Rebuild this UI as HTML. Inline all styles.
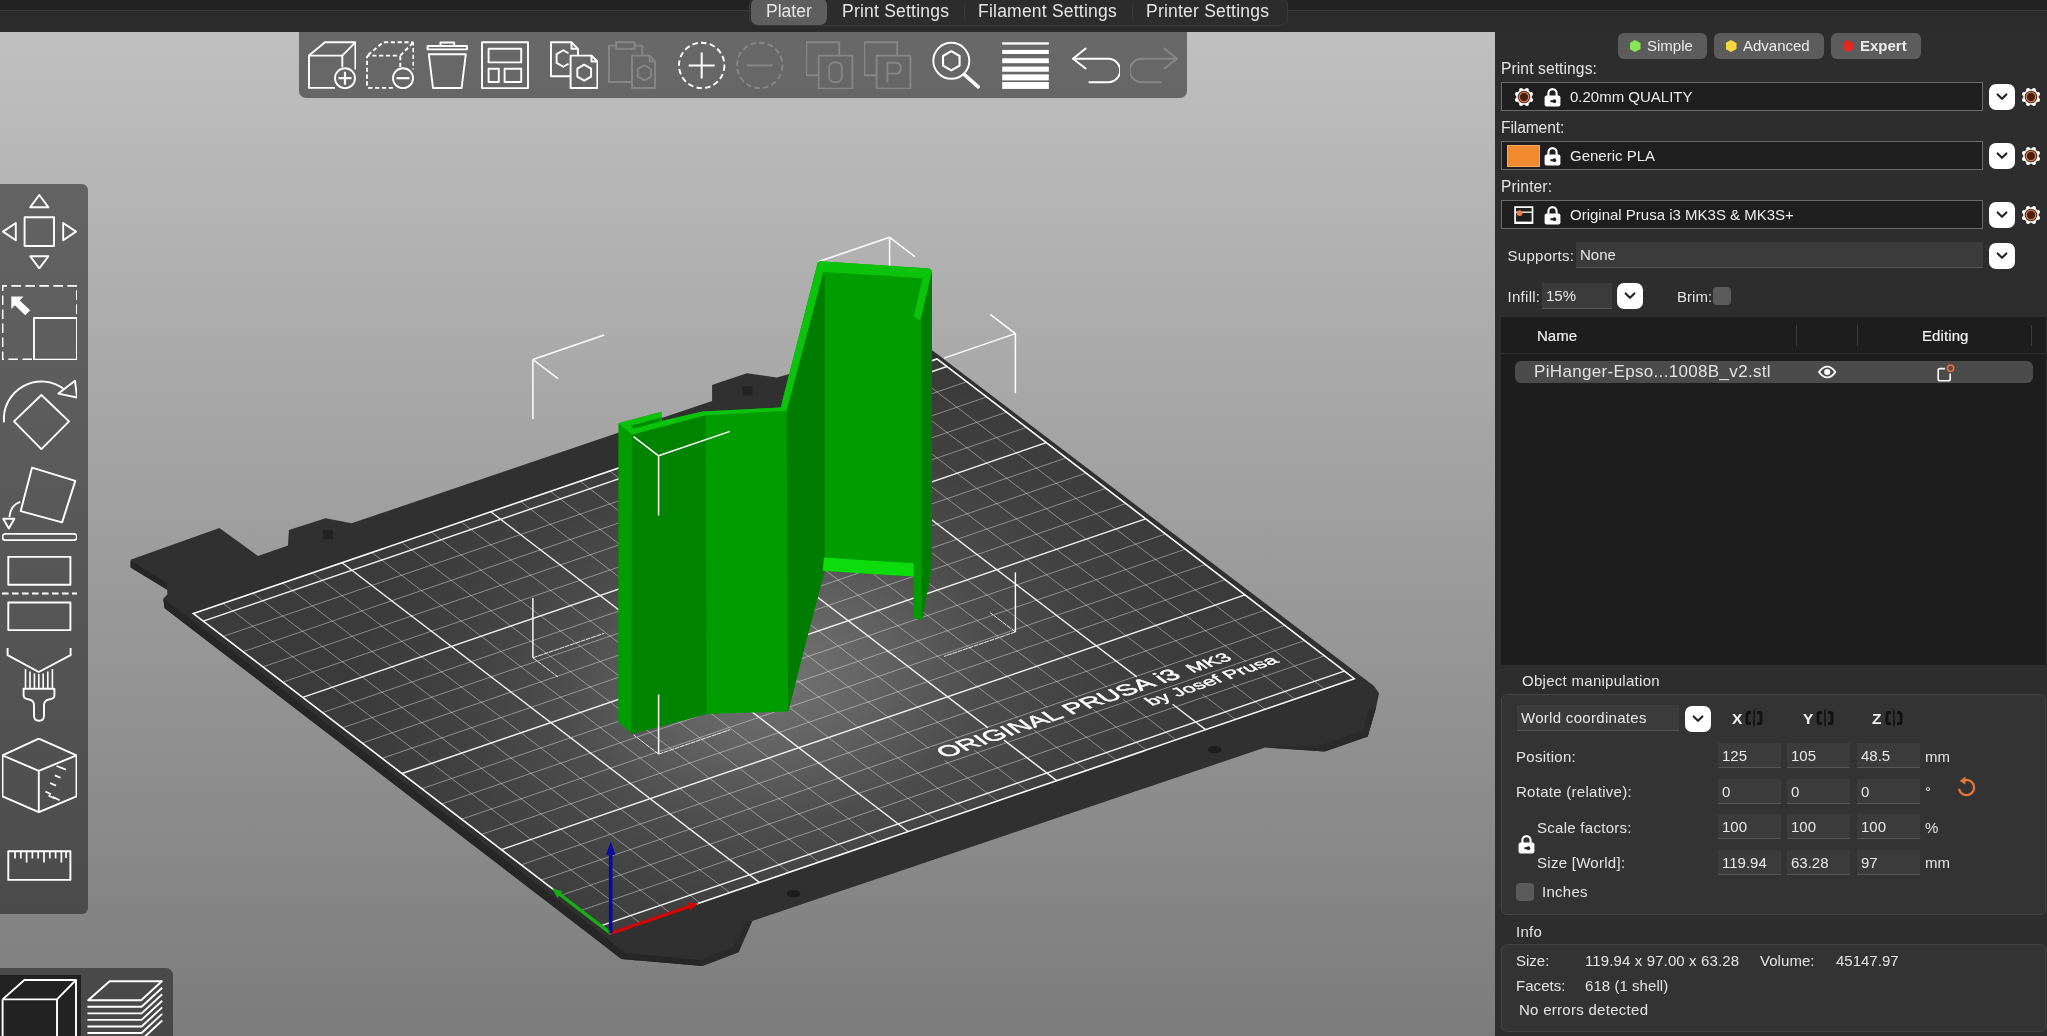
<!DOCTYPE html>
<html><head><meta charset="utf-8"><title>PrusaSlicer</title><style>
*{box-sizing:border-box;margin:0;padding:0}
html,body{width:2047px;height:1036px;overflow:hidden;background:#2b2b2b}
body{font-family:"Liberation Sans",sans-serif;color:#e6e6e6;position:relative;font-size:15px}
.abs{position:absolute}
#topbar{position:absolute;left:0;top:0;width:2047px;height:32px;background:#2b2b2b}
#topdark{position:absolute;left:0;top:0;width:2047px;height:10px;background:#222}
#topline{position:absolute;left:0;top:10px;width:2047px;height:1px;background:#383838}
#tabs{position:absolute;left:749px;top:-3px;width:539px;height:29px;background:#2c2c2c;border:1px solid #3a3a3a;border-radius:8px}
#tabs .sel{position:absolute;left:0.5px;top:0;width:76px;height:26.5px;background:#5e5e5e;border-radius:7px}
#tabs span{will-change:transform;position:absolute;top:3px;font-size:17.5px;color:#e6e6e6;white-space:nowrap;line-height:20px;letter-spacing:0.22px}
#tabs i{position:absolute;top:7px;width:1px;height:14px;background:#383838}
#canvas{position:absolute;left:0;top:32px;width:1495px;height:1004px;background:linear-gradient(#c0c0c0,#7c7c7c);overflow:hidden}
.scene{position:absolute;left:0;top:-32px;will-change:transform}
.tb{position:absolute;background:rgba(22,22,22,.515)}
#panel{position:absolute;left:1495px;top:32px;width:552px;height:1004px;background:#2d2d2d}
.lbl{position:absolute;white-space:nowrap;color:#e4e4e4;font-size:15px;line-height:18px;letter-spacing:0.28px;margin-top:1px}
.num{letter-spacing:0.1px}
.combo{position:absolute;left:1501px;width:482px;height:29px;background:#1e1e1e;border:1px solid #6a6a6a}
.combo span{position:absolute;left:68px;top:5px;font-size:15px;line-height:18px;color:#ececec;white-space:nowrap}
.dd{position:absolute;width:26.5px;height:26px;background:#fff;border-radius:7px;margin-left:-0.5px}
.dd svg{position:absolute;left:7px;top:8px}
.fld{position:absolute;background:#3b3b3b;border-bottom:1px solid #555;height:26px}
.fld span{position:absolute;left:4px;top:3.5px;font-size:15px;line-height:18px;color:#e8e8e8;white-space:nowrap}
.mode{position:absolute;top:33px;height:26px;background:#5c5c5c;border-radius:6px;font-size:15px;color:#ececec;line-height:26px;white-space:nowrap}
.mode b{position:absolute;left:11.5px;top:7px;width:11px;height:12px;clip-path:polygon(50% 0,100% 25%,100% 75%,50% 100%,0 75%,0 25%)}
.mode span{position:absolute;left:29px;top:0}
.chk{position:absolute;width:18px;height:18px;background:#5a5a5a;border-radius:4px}
.grp{position:absolute;left:1501px;width:545px;background:#333;border:1px solid #434343;border-radius:6px}
.in{position:absolute;width:63px;height:25px;background:#3b3b3b;border-bottom:1px solid #565656}
.in span{position:absolute;left:4px;top:3.5px;font-size:15px;line-height:18px;color:#e8e8e8}
</style></head><body>
<div id="topbar"><div id="topdark"></div><div id="topline"></div><div id="tabs"><div class="sel"></div><span style="left:16px;letter-spacing:0">Plater</span><span style="left:92px">Print Settings</span><span style="left:228px">Filament Settings</span><span style="left:396px">Printer Settings</span><i style="left:214px"></i><i style="left:382px"></i></div></div>
<div id="canvas"><svg class="scene" width="1495" height="1036" viewBox="0 0 1495 1036">
<defs>
<radialGradient id="bedhl" cx="0.5" cy="0.5" r="0.5"><stop offset="0" stop-color="#fff" stop-opacity="0.29"/><stop offset="0.25" stop-color="#fff" stop-opacity="0.2"/><stop offset="0.5" stop-color="#fff" stop-opacity="0.09"/><stop offset="0.75" stop-color="#fff" stop-opacity="0.03"/><stop offset="1" stop-color="#fff" stop-opacity="0"/></radialGradient>
<clipPath id="bedclip"><polygon points="610.7,933.4 1354.3,678.7 937.0,358.9 193.4,613.6"/></clipPath>
</defs>
<polygon points="130.6,559.8 130.6,567.6 167.3,589.8 167.3,594.6 163.4,598.5 164.4,608.1 590.0,934.7 621.3,959.1 702.4,966.0 738.5,952.3 752.2,921.0 1265.0,747.5 1324.8,751.6 1367.8,736.4 1376.0,707.7 1379.0,693.3 1374.0,686.0 908.5,332.3 788.5,374.2 776.8,377.6 747.0,373.2 712.1,384.9 712.1,401.0 351.7,523.2 325.6,518.3 288.9,529.9 288.0,545.4 258.0,556.0 219.4,528.0" fill="#303030" />
<polygon points="130.6,560.8 130.6,567.6 167.3,589.8 167.3,583.0" fill="#262626" />
<polygon points="163.4,598.5 164.4,608.1 590.0,934.7 621.3,959.1 702.4,966.0 700.0,960.0 625.0,953.0 597.0,930.0" fill="#262626" />
<polygon points="702.4,966.0 738.5,952.3 752.2,921.0 746.0,921.0 733.0,947.0 700.0,960.0" fill="#2a2a2a" />
<polygon points="1265.0,747.5 1324.8,751.6 1367.8,736.4 1376.0,707.7 1370.0,708.0 1362.0,731.0 1322.0,745.0" fill="#2a2a2a" />
<rect x="322.9" y="530.2" width="10" height="9" fill="#222"/>
<rect x="742.5" y="386.3" width="10" height="9" fill="#222"/>
<ellipse cx="793.4" cy="893.6" rx="7" ry="3.6" fill="#1c1c1c"/>
<ellipse cx="1214.8" cy="749.6" rx="7" ry="3.6" fill="#1c1c1c"/>
<polygon points="610.7,933.4 1354.3,678.7 937.0,358.9 193.4,613.6" fill="#3b3b3b" />
<g clip-path="url(#bedclip)"><ellipse cx="775" cy="675" rx="430" ry="300" fill="url(#bedhl)" transform="rotate(-10 775 675)"/></g>
<path d="M640.4 923.2L223.1 603.4M670.2 913.0L252.9 593.2M699.9 902.8L282.6 583.0M729.7 892.6L312.3 572.8M789.1 872.2L371.8 552.5M818.9 862.1L401.6 542.3M848.6 851.9L431.3 532.1M878.4 841.7L461.1 521.9M937.9 821.3L520.6 501.5M967.6 811.1L550.3 491.3M997.4 800.9L944.5 760.4M928.6 748.2L580.0 481.2M1027.1 790.7L974.2 750.2M958.3 738.1L609.8 471.0M1086.6 770.4L1033.7 729.9M1017.8 717.7L669.3 450.6M1116.3 760.2L1063.5 719.7M1047.6 707.5L699.0 440.4M1146.1 750.0L1093.2 709.5M1077.3 697.3L728.8 430.2M1175.8 739.8L1123.0 699.3M1107.1 687.1L758.5 420.0M1235.3 719.4L1202.3 694.2M1166.5 666.7L818.0 399.7M1265.0 709.2L1232.1 684.0M1196.3 656.6L847.7 389.5M1294.8 699.1L1261.8 673.8M1245.9 661.6L877.5 379.3M1324.5 688.9L907.2 369.1M580.9 910.5L1324.5 655.8M561.0 895.3L1304.6 640.6M541.1 880.1L1284.7 625.4M521.3 864.8L1264.9 610.2M481.5 834.4L1225.1 579.7M461.6 819.2L1205.2 564.5M441.8 803.9L1185.4 549.2M421.9 788.7L1165.5 534.0M382.2 758.3L1125.8 503.6M362.3 743.0L1105.9 488.3M342.4 727.8L1086.0 473.1M322.5 712.6L1066.1 457.9M282.8 682.1L1026.4 427.4M262.9 666.9L1006.5 412.2M243.0 651.7L986.6 397.0M223.2 636.4L966.8 381.7" stroke="#fff" stroke-opacity="0.4" stroke-width="1" fill="none"/>
<path d="M759.4 882.4L342.1 562.7M908.1 831.5L490.8 511.7M1056.8 780.6L1004.0 740.1M988.1 727.9L639.5 460.8M1205.6 729.6L1172.6 704.3M1136.8 676.9L788.2 409.8M600.7 925.8L1344.3 671.1M501.4 849.6L1245.0 594.9M402.0 773.5L1145.6 518.8M302.7 697.3L1046.3 442.7M203.3 621.2L946.9 366.5" stroke="#fff" stroke-opacity="0.92" stroke-width="1.4" fill="none"/>
<polygon points="610.7,933.4 1354.3,678.7 937.0,358.9 193.4,613.6" fill="none" stroke="#fff" stroke-width="1.6"/>
<text transform="matrix(2.9744 -1.0188 1.9872 1.5228 945.1 758.2)" font-family="Liberation Sans, sans-serif" font-size="8.35" fill="#fff" stroke="#fff" stroke-width="0.22" textLength="79.8" lengthAdjust="spacingAndGlyphs">ORIGINAL PRUSA i3</text>
<text transform="matrix(2.9744 -1.0188 1.9872 1.5228 1192.8 673.0)" font-family="Liberation Sans, sans-serif" font-size="6.6" fill="#fff" stroke="#fff" stroke-width="0.18" textLength="13.6" lengthAdjust="spacingAndGlyphs">MK3</text>
<text transform="matrix(2.9744 -1.0188 1.9872 1.5228 1151.8 705.9)" font-family="Liberation Sans, sans-serif" font-size="6.5" fill="#fff" stroke="#fff" stroke-width="0.18" textLength="43" lengthAdjust="spacingAndGlyphs">by Josef Prusa</text>
<path d="M889.6 237.3L818.3 261.7M889.6 237.3L914.8 256.6M889.6 237.3L889.6 296.9M532.9 359.5L604.2 335.0M532.9 359.5L558.0 378.7M532.9 359.5L532.9 419.1M1015.4 333.6L944.0 358.1M1015.4 333.6L990.2 314.4M1015.4 333.6L1015.4 393.3" stroke="#fff" stroke-width="1.5" fill="none"/>
<path d="M532.9 657.8L532.9 598.1" stroke="#fff" stroke-width="1.4" fill="none"/>
<path d="M532.9 657.8L604.2 633.3M532.9 657.8L558.0 677.0" stroke="#fff" stroke-width="1" stroke-opacity="0.88" stroke-dasharray="5 0.6" fill="none"/>
<path d="M1015.4 631.9L1015.4 572.3" stroke="#fff" stroke-width="1.4" fill="none"/>
<path d="M1015.4 631.9L944.0 656.4M1015.4 631.9L990.2 612.7" stroke="#fff" stroke-width="1" stroke-opacity="0.88" stroke-dasharray="5 0.6" fill="none"/>
<polygon points="618.4,423.2 661.5,411.8 661.5,421.0 702.5,411.5 780.7,407.4 817.7,262.5 819.5,261.2 929.5,268.6 931.9,271.0 931.9,567.7 921.8,620.4 913.7,617.9 913.7,576.5 822.7,570.8 824.6,570.8 803.9,650.0 788.2,711.5 706.6,714.0 631.4,734.1 618.2,721.6" fill="#009c00" />
<polygon points="632.0,434.5 705.5,415.2 706.6,714.0 631.4,734.1" fill="#008400" />
<polygon points="786.6,410.8 823.4,272.0 824.7,275.0 824.7,570.8 803.9,650.0 788.2,711.5" fill="#007c00" />
<polygon points="931.9,271.0 931.9,567.7 921.8,620.4 921.0,320.3" fill="#007c00" />
<polygon points="618.4,423.2 661.5,411.8 661.5,421.0 702.5,411.5 780.7,407.4 817.7,262.5 819.5,261.2 929.5,268.6 931.9,271.0 920.2,320.6 913.7,316.6 922.5,278.3 823.4,272.0 786.6,410.8 705.5,415.2 632.0,434.5" fill="#0cc30c" />
<polygon points="630.7,425.6 659.0,418.0 659.0,421.7 633.9,428.5" fill="#008a00" />
<polygon points="659.0,417.4 661.5,416.8 661.5,421.0 659.0,421.7" fill="#009c00" />
<polygon points="824.0,557.6 913.7,563.3 913.7,576.5 822.7,570.8" fill="#0cdc0c" />
<path d="M658.6 455.8L730.0 431.4M658.6 455.8L633.5 436.6M658.6 455.8L658.6 515.5" stroke="#fff" stroke-width="1.5" fill="none"/>
<path d="M658.6 754.1L658.6 694.5" stroke="#fff" stroke-width="1.5" fill="none"/>
<path d="M658.6 754.1L730.0 729.7M658.6 754.1L633.5 734.8" stroke="#fff" stroke-width="1" stroke-opacity="0.88" stroke-dasharray="5 0.6" fill="none"/>
<path d="M610.7 933.4L560.0 894.5" stroke="#14b014" stroke-width="3.3"/><polygon points="552.1,888.4 562.5,891.2 557.4,897.9" fill="#14b014"/>
<path d="M610.7 933.4L689.0 906.6" stroke="#cc0808" stroke-width="3.3"/><polygon points="698.4,903.3 690.3,910.5 687.6,902.6" fill="#cc0808"/>
<path d="M610.7 933.4L610.7 854.7" stroke="#0808a8" stroke-width="3.6"/><polygon points="610.7,841.7 615.3,854.7 606.1,854.7" fill="#0808a8"/>
</svg></div>
<div class="tb" style="left:299px;top:32px;width:888px;height:66px;border-radius:0 0 7px 7px"></div>
<svg style="position:absolute;left:308px;top:41px" width="48" height="48" viewBox="0 0 48 48"><g fill="none" stroke="#fff" stroke-width="1.9" stroke-linejoin="round" stroke-linecap="butt"><path d="M34.3 26V14.6H1V46.9H27"/><path d="M1 14.6L17 1.3H47.4V28.5"/><path d="M34.3 14.6L47.4 1.3"/><circle cx="37" cy="37.2" r="10"/><path d="M37 30.7V43.7M30.5 37.2H43.5" stroke-width="2.2"/></g></svg>
<svg style="position:absolute;left:366px;top:41px" width="48" height="48" viewBox="0 0 48 48"><g fill="none" stroke="#fff" stroke-width="1.9" stroke-linejoin="round" stroke-linecap="butt"><g stroke-dasharray="4.2 2.6"><path d="M34.3 26V16.6Q34.3 14.6 32.3 14.6H3Q1 14.6 1 16.6V44.9Q1 46.9 3 46.9H27"/><path d="M2 14L16 2.3Q17 1.3 19 1.3H45.4Q47.4 1.3 47.4 3.3V28.5"/><path d="M34.3 14.6L46.8 2"/></g><circle cx="37" cy="37.2" r="10"/><path d="M30.5 37.2H43.5" stroke-width="2.2"/></g></svg>
<svg style="position:absolute;left:424px;top:41px" width="48" height="48" viewBox="0 0 48 48"><g fill="none" stroke="#fff" stroke-width="1.9" stroke-linejoin="round" stroke-linecap="butt"><path d="M16.4 5V1.5H30.2V5"/><rect x="3.6" y="5" width="39.4" height="3.4"/><path d="M4.8 13.2H41.8L37.6 47H9Z"/></g></svg>
<svg style="position:absolute;left:481px;top:41px" width="48" height="48" viewBox="0 0 48 48"><g fill="none" stroke="#fff" stroke-width="1.9" stroke-linejoin="round" stroke-linecap="butt"><rect x="1" y="1.3" width="46" height="45.8"/><rect x="7.6" y="7.8" width="32.6" height="13.6"/><rect x="7.6" y="27.8" width="10.2" height="13.2"/><rect x="23.6" y="27.8" width="16.6" height="13.2"/></g></svg>
<svg style="position:absolute;left:550px;top:41px" width="48" height="48" viewBox="0 0 48 48"><g fill="none" stroke="#fff" stroke-width="1.9" stroke-linejoin="round" stroke-linecap="butt"><path d="M20.6 35.2H1V1.3H21.5L28 7.8V14.6"/><path d="M21.5 1.3V7.8H28"/><path d="M18.5 12.2L13.3 9.2L6.6 13.1V21.9L13.3 25.8L18.5 22.8"/><path d="M20.6 14.6H41.5L47.4 20.5V47H20.6Z"/><path d="M41.5 14.6V20.5H47.4"/><path d="M41.1 35.6L34.2 39.6L27.3 35.6L27.3 27.6L34.2 23.6L41.1 27.6Z"/></g></svg>
<svg style="position:absolute;left:608px;top:41px" width="48" height="48" viewBox="0 0 48 48" opacity="0.2"><g fill="none" stroke="#fff" stroke-width="1.9" stroke-linejoin="round" stroke-linecap="butt"><path d="M24 41H0.9V4.6H8.2M26.6 4.6H34.3V14.6"/><rect x="8.2" y="1.3" width="18.4" height="6.4"/><path d="M24 14.6H41.5L47 20.5V47H24Z"/><path d="M41.5 14.6V20.5H47"/><path d="M43.0 35.6L36.4 39.4L29.8 35.6L29.8 28.0L36.4 24.2L43.0 28.0Z"/></g></svg>
<svg style="position:absolute;left:678px;top:41px" width="48" height="48" viewBox="0 0 48 48"><g fill="none" stroke="#fff" stroke-width="1.9" stroke-linejoin="round" stroke-linecap="butt"><circle cx="23.7" cy="24.4" r="22.7" stroke-dasharray="5.6 3.2"/><path d="M23.7 11.4V37.4M10.7 24.4H36.7" stroke-width="2"/></g></svg>
<svg style="position:absolute;left:736px;top:41px" width="48" height="48" viewBox="0 0 48 48" opacity="0.2"><g fill="none" stroke="#fff" stroke-width="1.9" stroke-linejoin="round" stroke-linecap="butt"><circle cx="23.7" cy="24.4" r="22.7" stroke-dasharray="5.6 3.2"/><path d="M10.7 24.4H36.7" stroke-width="2"/></g></svg>
<svg style="position:absolute;left:806px;top:41px" width="48" height="48" viewBox="0 0 48 48" opacity="0.2"><g fill="none" stroke="#fff" stroke-width="1.9" stroke-linejoin="round" stroke-linecap="butt"><path d="M12.6 34.2H0.3V1.3H33.2V14.6"/><rect x="12.6" y="14.6" width="33.8" height="33"/><rect x="23.2" y="21.5" width="12.6" height="19.6" rx="5"/></g></svg>
<svg style="position:absolute;left:864px;top:41px" width="48" height="48" viewBox="0 0 48 48" opacity="0.2"><g fill="none" stroke="#fff" stroke-width="1.9" stroke-linejoin="round" stroke-linecap="butt"><path d="M12.6 34.2H0.3V1.3H33.2V14.6"/><rect x="12.6" y="14.6" width="33.8" height="33"/><path d="M23.4 41.6V21.8H31.5Q36.8 21.8 36.8 27.2Q36.8 32.6 31.5 32.6H23.4"/></g></svg>
<svg style="position:absolute;left:932px;top:41px" width="48" height="48" viewBox="0 0 48 48"><g fill="none" stroke="#fff" stroke-width="1.9" stroke-linejoin="round" stroke-linecap="butt"><circle cx="19.3" cy="19.8" r="18"/><path d="M27.6 24.6L19.3 29.4L11.0 24.6L11.0 15.0L19.3 10.2L27.6 15.0Z" stroke-width="2.1"/><path d="M32.4 33.6L46.2 45.8" stroke-width="3.6" stroke-linecap="round"/></g></svg>
<svg style="position:absolute;left:1002px;top:41px" width="48" height="48" viewBox="0 0 48 48"><g fill="none" stroke="#fff" stroke-width="1.9" stroke-linejoin="round" stroke-linecap="butt"><g stroke="none" fill="#fff"><rect x="0.2" y="1.3" width="46.6" height="2.3"/><rect x="0.2" y="8.9" width="46.6" height="4.1"/><rect x="0.2" y="17.3" width="46.6" height="4.9"/><rect x="0.2" y="25.6" width="46.6" height="5.1"/><rect x="0.2" y="33.4" width="46.6" height="6"/><rect x="0.2" y="41" width="46.6" height="6.9"/></g></g></svg>
<svg style="position:absolute;left:1072px;top:41px" width="48" height="48" viewBox="0 0 48 48"><g fill="none" stroke="#fff" stroke-width="1.9" stroke-linejoin="round" stroke-linecap="butt"><path d="M13.6 7.4L1 17.8L13.6 27.4" stroke-linecap="round"/><path d="M1.2 17.8H36.4A11.7 11.7 0 0 1 36.4 41.2H17.4" stroke-linecap="round"/></g></svg>
<svg style="position:absolute;left:1130px;top:41px" width="48" height="48" viewBox="0 0 48 48" opacity="0.2"><g fill="none" stroke="#fff" stroke-width="1.9" stroke-linejoin="round" stroke-linecap="butt"><path d="M34.4 7.4L47 17.8L34.4 27.4" stroke-linecap="round"/><path d="M46.8 17.8H11.6A11.7 11.7 0 0 0 11.6 41.2H30.6" stroke-linecap="round"/></g></svg>
<div class="tb" style="left:0;top:184px;width:88px;height:730px;border-radius:0 6px 6px 0"></div>
<svg style="position:absolute;left:2px;top:194.3px" width="75" height="75" viewBox="0 0 75 75"><g fill="none" stroke="#fff" stroke-width="1.9" stroke-linejoin="round" stroke-linecap="butt"><rect x="22.6" y="23.3" width="29.4" height="28.7"/><path d="M37.3 1L28.2 13.2H46.4Z"/><path d="M37.3 74.4L28.2 62.2H46.4Z"/><path d="M1 37.6L13.8 29V46.3Z"/><path d="M74 37.6L61.2 29V46.3Z"/></g></svg>
<svg style="position:absolute;left:2px;top:284.6px" width="75" height="75" viewBox="0 0 75 75"><g fill="none" stroke="#fff" stroke-width="1.9" stroke-linejoin="round" stroke-linecap="butt"><path d="M32 74.5H0.5V0.9H75V33" stroke-dasharray="9.6 4.4" stroke-dashoffset="-2"/><rect x="32" y="33" width="43" height="41.6"/><path d="M9.3 11.6H21.5L17.7 15.4L28.2 25.2L23.2 30.3L12.9 20.3L9.3 24Z" fill="#fff" stroke="none"/></g></svg>
<svg style="position:absolute;left:2px;top:375.2px" width="75" height="75" viewBox="0 0 75 75"><g fill="none" stroke="#fff" stroke-width="1.9" stroke-linejoin="round" stroke-linecap="butt"><path d="M39.4 20L67 46.4L39.4 74.2L12 46.4Z"/><path d="M2 47.4A37.5 37.5 0 0 1 62.5 14.5"/><path d="M56.4 18.6L73 5.8L75 22.5Z"/></g></svg>
<svg style="position:absolute;left:2px;top:465.8px" width="75" height="75" viewBox="0 0 75 75"><g fill="none" stroke="#fff" stroke-width="1.9" stroke-linejoin="round" stroke-linecap="butt"><path d="M30 1.7L73.3 14.9L60.1 56.4L18.7 45.1Z"/><path d="M18.2 35.8Q8.5 39 7.4 51"/><path d="M1.2 52.8H12.4L6.8 62.4Z"/><rect x="0.4" y="67.9" width="74.6" height="6.4" rx="3.2"/></g></svg>
<svg style="position:absolute;left:2px;top:556.4px" width="75" height="75" viewBox="0 0 75 75"><g fill="none" stroke="#fff" stroke-width="1.9" stroke-linejoin="round" stroke-linecap="butt"><rect x="6.3" y="0.8" width="62.1" height="28"/><path d="M0 37.5H75" stroke-dasharray="6.6 3.4"/><rect x="6.3" y="46.5" width="62.1" height="27.6"/></g></svg>
<svg style="position:absolute;left:2px;top:647px" width="75" height="75" viewBox="0 0 75 75"><g fill="none" stroke="#fff" stroke-width="1.9" stroke-linejoin="round" stroke-linecap="butt"><path d="M5.6 1.1V8.2L36.8 25L68.6 8.2V1.1"/><path d="M23.5 22V41.8M28 24.4V41.8M32.4 26.6V41.8M36.8 27V41.8M41.2 26.6V41.8M45.8 24.4V41.8M50.4 22V41.8" stroke-width="1.6"/><path d="M21.6 41.8V48.2Q21.6 51.6 26 52.2Q32 53 32 58V68.5Q32 73.8 37 73.8Q42 73.8 42 68.5V58Q42 53 48 52.2Q52.4 51.6 52.4 48.2V41.8Z"/></g></svg>
<svg style="position:absolute;left:2px;top:737.6px" width="75" height="75" viewBox="0 0 75 75"><g fill="none" stroke="#fff" stroke-width="1.9" stroke-linejoin="round" stroke-linecap="butt"><path d="M36.8 0.6L74.5 17.4V58.4L36.8 74.2L0.5 58.4V17.4Z"/><path d="M0.5 17.4L36.8 32.8L74.5 17.4M36.8 32.8V74.2"/><path d="M54.6 28L64 31.6M52.8 37.4L58.6 39.8M48 45L54 47.6M43.4 53.6L49 56.2M46.4 57.4L52.8 60.4M51 59L57.6 62.2" stroke-width="1.7"/></g></svg>
<svg style="position:absolute;left:2px;top:828.2px" width="75" height="75" viewBox="0 0 75 75"><g fill="none" stroke="#fff" stroke-width="1.9" stroke-linejoin="round" stroke-linecap="butt"><rect x="6.3" y="23.3" width="62.1" height="28.6"/><path d="M13 23.3V30.4M18.8 23.3V30.4M24.6 23.3V34.4M30.4 23.3V30.4M36.2 23.3V30.4M42 23.3V34.4M47.8 23.3V30.4M53.6 23.3V30.4M59.4 23.3V34.4M64 23.3V30" stroke-width="1.7"/></g></svg>
<div class="tb" style="left:0;top:968px;width:173px;height:68px;border-radius:0 7px 0 0"></div>
<div class="abs" style="left:0;top:975px;width:81px;height:61px;background:#222"></div>
<svg class="abs" style="left:0;top:975px" width="82" height="61" viewBox="0 0 82 61"><g fill="none" stroke="#fff" stroke-width="1.9" stroke-linejoin="round"><path d="M2.6 24.4H57V63M2.6 24.4V63M2.6 24.4L24.4 5H76V63M57 24.4L76 5"/></g></svg><svg class="abs" style="left:84px;top:975px" width="84" height="61" viewBox="84 975 84 61"><g fill="none" stroke="#fff" stroke-width="1.9" stroke-linejoin="round"><path d="M88.2 1000.3L109.6 981.2H161.8L141.2 1000.3Z"/><path d="M87.4 1006.8H141.6L162.2 987.7"/><path d="M87.4 1013.4H141.6L162.2 994.3"/><path d="M87.4 1019.9H141.6L162.2 1000.8"/><path d="M87.4 1026.5H141.6L162.2 1007.4"/><path d="M87.4 1033.0H141.6L162.2 1013.9"/><path d="M87.4 1039.6H141.6L162.2 1020.5"/></g></svg>
<div id="panel"></div>
<div style="position:absolute;left:0;top:0;width:2047px;height:1036px;will-change:transform"><div class="mode" style="left:1618px;width:89px"><b style="background:#86e656"></b><span>Simple</span></div>
<div class="mode" style="left:1714px;width:110px"><b style="background:#f8d640"></b><span>Advanced</span></div>
<div class="mode" style="left:1831px;width:90px"><b style="background:#e2281e"></b><span style="font-weight:bold">Expert</span></div>
<div class="lbl" style="left:1501px;top:59px;font-size:15.6px;letter-spacing:0.1px">Print settings:</div>
<div class="combo" style="top:82px"><span>0.20mm QUALITY</span></div>
<svg class="abs" style="left:1512.7px;top:86px" width="22" height="22" viewBox="-11 -11 22 22"><circle cx="6.98" cy="2.89" r="2.05" fill="#fff"/><circle cx="2.89" cy="6.98" r="2.05" fill="#fff"/><circle cx="-2.89" cy="6.98" r="2.05" fill="#fff"/><circle cx="-6.98" cy="2.89" r="2.05" fill="#fff"/><circle cx="-6.98" cy="-2.89" r="2.05" fill="#fff"/><circle cx="-2.89" cy="-6.98" r="2.05" fill="#fff"/><circle cx="2.89" cy="-6.98" r="2.05" fill="#fff"/><circle cx="6.98" cy="-2.89" r="2.05" fill="#fff"/><circle r="7.8" fill="#fff"/><circle r="6.3" fill="#5a2a14"/><circle r="4.7" fill="none" stroke="#d98a62" stroke-width="1.1"/><circle r="3.6" fill="#4a1e08"/></svg>
<svg class="abs" style="left:1544.2px;top:88px" width="17" height="19" viewBox="0 0 17 19"><path d="M4.4 8V5.2A4.1 4.1 0 0 1 12.6 5.2V8" fill="none" stroke="#fff" stroke-width="2.1"/><rect x="0.6" y="7.6" width="15.8" height="11" rx="2" fill="#fff"/><path d="M6.4 13.2H9.6" stroke="#222" stroke-width="2"/><circle cx="10.4" cy="13.2" r="1.9" fill="#222"/></svg>
<div class="dd" style="left:1989px;top:84px"><svg width="12" height="10" viewBox="0 0 12 10"><path d="M1.6 2.4L6 6.8L10.4 2.4" fill="none" stroke="#222" stroke-width="2.1" stroke-linecap="round" stroke-linejoin="round"/></svg></div>
<svg class="abs" style="left:2020px;top:86px" width="22" height="22" viewBox="-11 -11 22 22"><circle cx="6.98" cy="2.89" r="2.05" fill="#fff"/><circle cx="2.89" cy="6.98" r="2.05" fill="#fff"/><circle cx="-2.89" cy="6.98" r="2.05" fill="#fff"/><circle cx="-6.98" cy="2.89" r="2.05" fill="#fff"/><circle cx="-6.98" cy="-2.89" r="2.05" fill="#fff"/><circle cx="-2.89" cy="-6.98" r="2.05" fill="#fff"/><circle cx="2.89" cy="-6.98" r="2.05" fill="#fff"/><circle cx="6.98" cy="-2.89" r="2.05" fill="#fff"/><circle r="7.8" fill="#fff"/><circle r="6.3" fill="#5a2a14"/><circle r="4.7" fill="none" stroke="#d98a62" stroke-width="1.1"/><circle r="3.6" fill="#4a1e08"/></svg>
<div class="lbl" style="left:1501px;top:118px;font-size:15.6px;letter-spacing:-0.1px">Filament:</div>
<div class="combo" style="top:141px"><span>Generic PLA</span></div>
<div class="abs" style="left:1507px;top:145px;width:33px;height:22px;background:#f28b30;border:1px solid #f5a860"></div>
<svg class="abs" style="left:1544px;top:147px" width="17" height="19" viewBox="0 0 17 19"><path d="M4.4 8V5.2A4.1 4.1 0 0 1 12.6 5.2V8" fill="none" stroke="#fff" stroke-width="2.1"/><rect x="0.6" y="7.6" width="15.8" height="11" rx="2" fill="#fff"/><path d="M6.4 13.2H9.6" stroke="#222" stroke-width="2"/><circle cx="10.4" cy="13.2" r="1.9" fill="#222"/></svg>
<div class="dd" style="left:1989px;top:143px"><svg width="12" height="10" viewBox="0 0 12 10"><path d="M1.6 2.4L6 6.8L10.4 2.4" fill="none" stroke="#222" stroke-width="2.1" stroke-linecap="round" stroke-linejoin="round"/></svg></div>
<svg class="abs" style="left:2020px;top:145px" width="22" height="22" viewBox="-11 -11 22 22"><circle cx="6.98" cy="2.89" r="2.05" fill="#fff"/><circle cx="2.89" cy="6.98" r="2.05" fill="#fff"/><circle cx="-2.89" cy="6.98" r="2.05" fill="#fff"/><circle cx="-6.98" cy="2.89" r="2.05" fill="#fff"/><circle cx="-6.98" cy="-2.89" r="2.05" fill="#fff"/><circle cx="-2.89" cy="-6.98" r="2.05" fill="#fff"/><circle cx="2.89" cy="-6.98" r="2.05" fill="#fff"/><circle cx="6.98" cy="-2.89" r="2.05" fill="#fff"/><circle r="7.8" fill="#fff"/><circle r="6.3" fill="#5a2a14"/><circle r="4.7" fill="none" stroke="#d98a62" stroke-width="1.1"/><circle r="3.6" fill="#4a1e08"/></svg>
<div class="lbl" style="left:1501px;top:177px;font-size:15.6px;letter-spacing:0.1px">Printer:</div>
<div class="combo" style="top:200px"><span>Original Prusa i3 MK3S &amp; MK3S+</span></div>
<svg class="abs" style="left:1514px;top:205.5px" width="20" height="19" viewBox="0 0 20 19"><rect x="1.1" y="1.1" width="17.4" height="16" fill="none" stroke="#fff" stroke-width="1.7"/><path d="M1 16.8H18.6" stroke="#fff" stroke-width="2.4"/><path d="M2 6.2H18" stroke="#fff" stroke-width="1.3"/><circle cx="5.6" cy="7.1" r="2.9" fill="#f07a42"/></svg>
<svg class="abs" style="left:1544px;top:206px" width="17" height="19" viewBox="0 0 17 19"><path d="M4.4 8V5.2A4.1 4.1 0 0 1 12.6 5.2V8" fill="none" stroke="#fff" stroke-width="2.1"/><rect x="0.6" y="7.6" width="15.8" height="11" rx="2" fill="#fff"/><path d="M6.4 13.2H9.6" stroke="#222" stroke-width="2"/><circle cx="10.4" cy="13.2" r="1.9" fill="#222"/></svg>
<div class="dd" style="left:1989px;top:202px"><svg width="12" height="10" viewBox="0 0 12 10"><path d="M1.6 2.4L6 6.8L10.4 2.4" fill="none" stroke="#222" stroke-width="2.1" stroke-linecap="round" stroke-linejoin="round"/></svg></div>
<svg class="abs" style="left:2020px;top:204px" width="22" height="22" viewBox="-11 -11 22 22"><circle cx="6.98" cy="2.89" r="2.05" fill="#fff"/><circle cx="2.89" cy="6.98" r="2.05" fill="#fff"/><circle cx="-2.89" cy="6.98" r="2.05" fill="#fff"/><circle cx="-6.98" cy="2.89" r="2.05" fill="#fff"/><circle cx="-6.98" cy="-2.89" r="2.05" fill="#fff"/><circle cx="-2.89" cy="-6.98" r="2.05" fill="#fff"/><circle cx="2.89" cy="-6.98" r="2.05" fill="#fff"/><circle cx="6.98" cy="-2.89" r="2.05" fill="#fff"/><circle r="7.8" fill="#fff"/><circle r="6.3" fill="#5a2a14"/><circle r="4.7" fill="none" stroke="#d98a62" stroke-width="1.1"/><circle r="3.6" fill="#4a1e08"/></svg>
<div class="lbl" style="left:1507.5px;top:246px">Supports:</div>
<div class="fld" style="left:1576px;top:242px;width:407px"><span>None</span></div>
<div class="dd" style="left:1989px;top:243px"><svg width="12" height="10" viewBox="0 0 12 10"><path d="M1.6 2.4L6 6.8L10.4 2.4" fill="none" stroke="#222" stroke-width="2.1" stroke-linecap="round" stroke-linejoin="round"/></svg></div>
<div class="lbl" style="left:1507.5px;top:287px">Infill:</div>
<div class="fld" style="left:1542px;top:283px;width:70px"><span>15%</span></div>
<div class="dd" style="left:1617px;top:283px"><svg width="12" height="10" viewBox="0 0 12 10"><path d="M1.6 2.4L6 6.8L10.4 2.4" fill="none" stroke="#222" stroke-width="2.1" stroke-linecap="round" stroke-linejoin="round"/></svg></div>
<div class="lbl" style="left:1677px;top:287px;letter-spacing:0.05px">Brim:</div>
<div class="chk" style="left:1713px;top:287px"></div>
<div class="abs" style="left:1501px;top:317px;width:544.5px;height:347.7px;background:#1d1d1d"></div>
<div class="abs" style="left:1501px;top:353px;width:546px;height:1px;background:#2e2e2e"></div>
<div class="abs" style="left:1796px;top:325px;width:1px;height:21px;background:#3a3a3a"></div>
<div class="abs" style="left:1857px;top:325px;width:1px;height:21px;background:#3a3a3a"></div>
<div class="abs" style="left:2031px;top:325px;width:1px;height:21px;background:#3a3a3a"></div>
<div class="lbl" style="left:1537px;top:326px;color:#f0f0f0;letter-spacing:0;-webkit-text-stroke:0.2px #f0f0f0">Name</div>
<div class="lbl" style="left:1922px;top:326px;color:#f0f0f0;letter-spacing:0.1px;-webkit-text-stroke:0.2px #f0f0f0">Editing</div>
<div class="abs" style="left:1515px;top:361px;width:518px;height:22px;background:#4b4b4b;border-radius:6px"></div>
<div class="lbl" style="left:1534px;top:361px;font-size:17px;line-height:21px;letter-spacing:0.33px;margin-top:0;color:#e2e2e2">PiHanger-Epso...1008B_v2.stl</div>
<svg class="abs" style="left:1817.5px;top:365px" width="18.4" height="14" viewBox="0 0 21 16"><path d="M1.2 8Q5.4 1.8 10.5 1.8Q15.6 1.8 19.8 8Q15.6 14.2 10.5 14.2Q5.4 14.2 1.2 8Z" fill="none" stroke="#fff" stroke-width="2.1"/><circle cx="10.5" cy="8" r="3.5" fill="#fff"/></svg>
<svg class="abs" style="left:1936px;top:363px" width="21" height="20" viewBox="0 0 21 20"><path d="M9 5.6H4Q2.2 5.6 2.2 7.4V16Q2.2 17.8 4 17.8H12.4Q14.2 17.8 14.2 16V10.4" fill="none" stroke="#fff" stroke-width="1.6"/><circle cx="14.6" cy="5.2" r="3.1" fill="none" stroke="#e8693a" stroke-width="1.7"/></svg>
<div class="lbl" style="left:1522px;top:671px">Object manipulation</div>
<div class="grp" style="top:694px;height:221px"></div>
<div class="fld" style="left:1517px;top:705px;width:162px"><span style="letter-spacing:0.3px">World coordinates</span></div>
<div class="dd" style="left:1685px;top:706px"><svg width="12" height="10" viewBox="0 0 12 10"><path d="M1.6 2.4L6 6.8L10.4 2.4" fill="none" stroke="#222" stroke-width="2.1" stroke-linecap="round" stroke-linejoin="round"/></svg></div>
<div class="lbl" style="left:1732px;top:709px;font-weight:bold;font-size:15.5px;color:#f2f2f2;letter-spacing:0">X</div>
<svg class="abs" style="left:1745px;top:709px" width="18" height="18" viewBox="0 0 18 18"><path d="M6 3.4H3.6Q2 3.4 2 5V13Q2 14.6 3.6 14.6H6M12 3.4H14.4Q16 3.4 16 5V13Q16 14.6 14.4 14.6H12" fill="none" stroke="#121212" stroke-width="3"/><path d="M9 0.5V17.5" stroke="#121212" stroke-width="1.5"/></svg>
<div class="lbl" style="left:1803px;top:709px;font-weight:bold;font-size:15.5px;color:#f2f2f2;letter-spacing:0">Y</div>
<svg class="abs" style="left:1816px;top:709px" width="18" height="18" viewBox="0 0 18 18"><path d="M6 3.4H3.6Q2 3.4 2 5V13Q2 14.6 3.6 14.6H6M12 3.4H14.4Q16 3.4 16 5V13Q16 14.6 14.4 14.6H12" fill="none" stroke="#121212" stroke-width="3"/><path d="M9 0.5V17.5" stroke="#121212" stroke-width="1.5"/></svg>
<div class="lbl" style="left:1872px;top:709px;font-weight:bold;font-size:15.5px;color:#f2f2f2;letter-spacing:0">Z</div>
<svg class="abs" style="left:1885px;top:709px" width="18" height="18" viewBox="0 0 18 18"><path d="M6 3.4H3.6Q2 3.4 2 5V13Q2 14.6 3.6 14.6H6M12 3.4H14.4Q16 3.4 16 5V13Q16 14.6 14.4 14.6H12" fill="none" stroke="#121212" stroke-width="3"/><path d="M9 0.5V17.5" stroke="#121212" stroke-width="1.5"/></svg>
<div class="lbl" style="left:1516px;top:747px">Position:</div>
<div class="in" style="left:1718px;top:743px"><span>125</span></div>
<div class="in" style="left:1787px;top:743px"><span>105</span></div>
<div class="in" style="left:1857px;top:743px"><span>48.5</span></div>
<div class="lbl" style="left:1925px;top:747px;letter-spacing:0">mm</div>
<div class="lbl" style="left:1516px;top:782px">Rotate (relative):</div>
<div class="in" style="left:1718px;top:779px"><span>0</span></div>
<div class="in" style="left:1787px;top:779px"><span>0</span></div>
<div class="in" style="left:1857px;top:779px"><span>0</span></div>
<div class="lbl" style="left:1925px;top:782px;letter-spacing:0">°</div>
<div class="lbl" style="left:1537px;top:818px">Scale factors:</div>
<div class="in" style="left:1718px;top:814px"><span>100</span></div>
<div class="in" style="left:1787px;top:814px"><span>100</span></div>
<div class="in" style="left:1857px;top:814px"><span>100</span></div>
<div class="lbl" style="left:1925px;top:818px;letter-spacing:0">%</div>
<div class="lbl" style="left:1537px;top:853px">Size [World]:</div>
<div class="in" style="left:1718px;top:850px"><span>119.94</span></div>
<div class="in" style="left:1787px;top:850px"><span>63.28</span></div>
<div class="in" style="left:1857px;top:850px"><span>97</span></div>
<div class="lbl" style="left:1925px;top:853px;letter-spacing:0">mm</div>
<svg class="abs" style="left:1954px;top:775px" width="24" height="24" viewBox="0 0 24 24"><path d="M9.4 5.6A7.6 7.6 0 1 1 5.2 14.6" fill="none" stroke="#e8783a" stroke-width="2.3" stroke-linecap="round"/><path d="M11.4 1.6L5.6 6L11.6 9.4Z" fill="#e8783a"/></svg>
<svg class="abs" style="left:1518px;top:835px" width="17" height="19" viewBox="0 0 17 19"><path d="M4.4 8V5.2A4.1 4.1 0 0 1 12.6 5.2V8" fill="none" stroke="#fff" stroke-width="2.1"/><rect x="0.6" y="7.6" width="15.8" height="11" rx="2" fill="#fff"/><path d="M6.4 13.2H9.6" stroke="#222" stroke-width="2"/><circle cx="10.4" cy="13.2" r="1.9" fill="#222"/></svg>
<div class="chk" style="left:1516px;top:883px"></div>
<div class="lbl" style="left:1542px;top:882px">Inches</div>
<div class="lbl" style="left:1516px;top:922px">Info</div>
<div class="grp" style="top:944px;height:88px"></div>
<div class="lbl" style="left:1516px;top:951px;letter-spacing:0">Size:</div>
<div class="lbl" style="left:1585px;top:951px;letter-spacing:0.12px">119.94 x 97.00 x 63.28</div>
<div class="lbl" style="left:1760px;top:951px;letter-spacing:0.05px">Volume:</div>
<div class="lbl" style="left:1836px;top:951px;letter-spacing:0">45147.97</div>
<div class="lbl" style="left:1516px;top:976px;letter-spacing:0.05px">Facets:</div>
<div class="lbl" style="left:1585px;top:976px;letter-spacing:0.05px">618 (1 shell)</div>
<div class="lbl" style="left:1519px;top:1000px">No errors detected</div></div>
</body></html>
